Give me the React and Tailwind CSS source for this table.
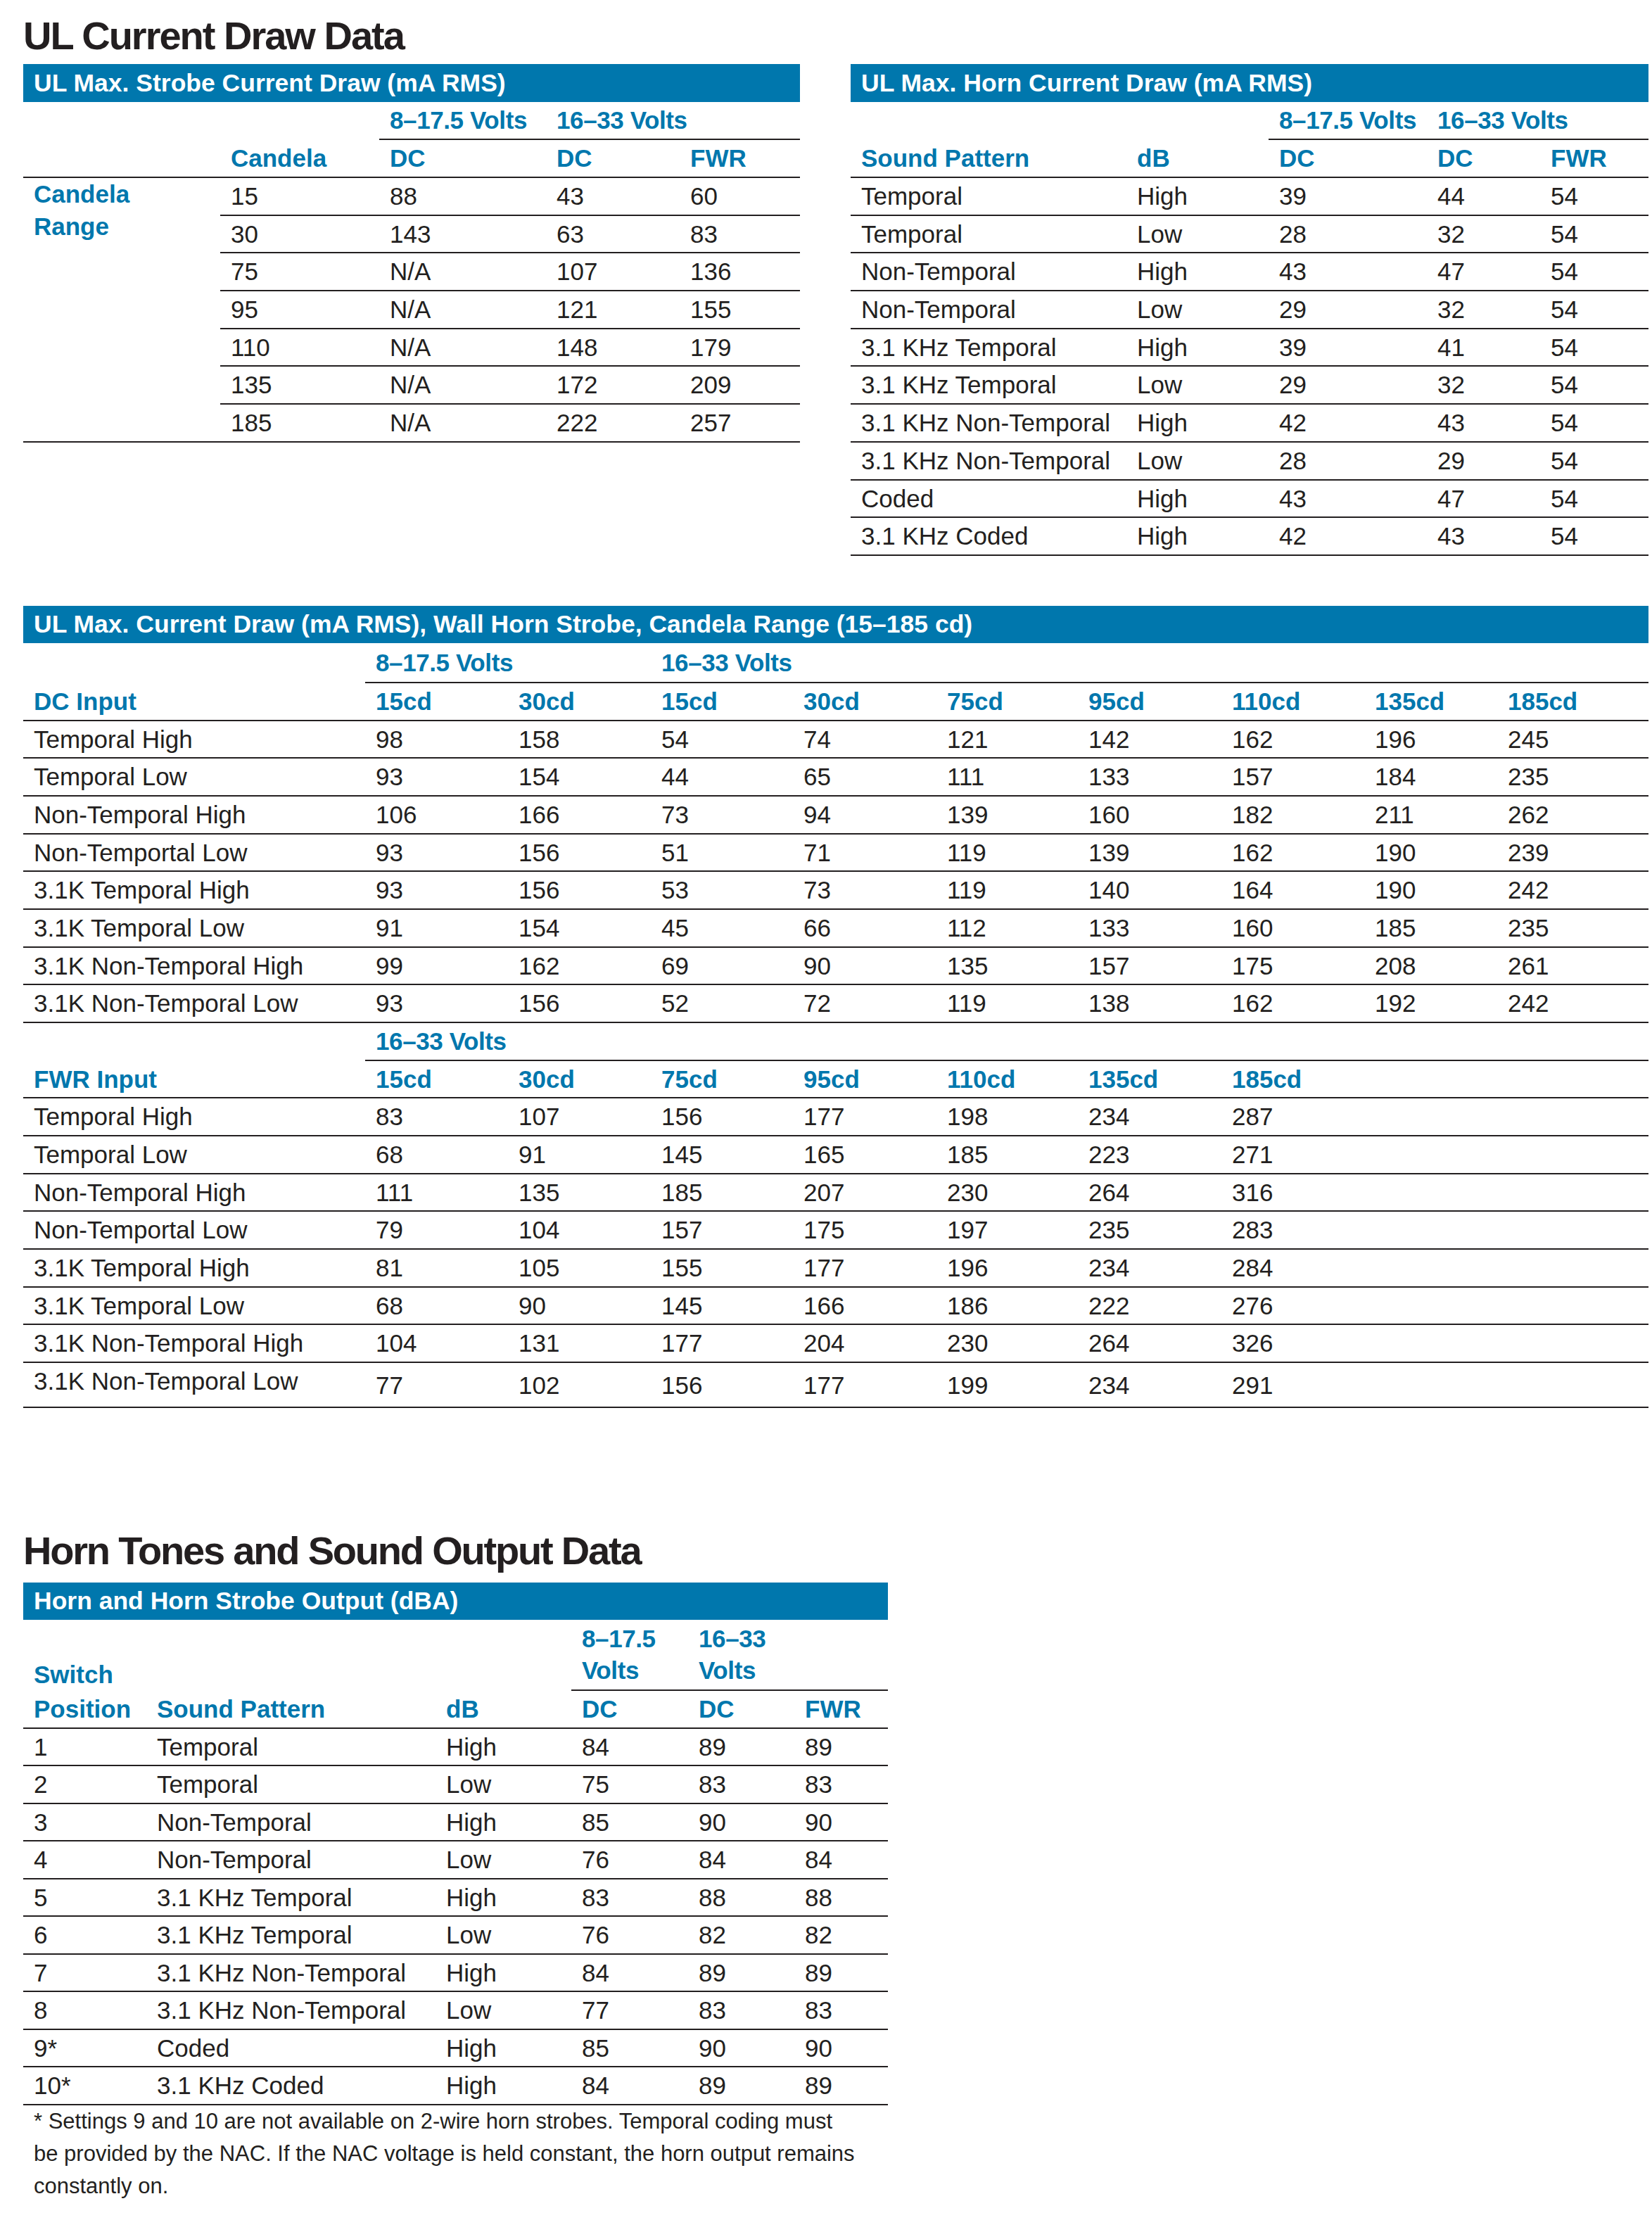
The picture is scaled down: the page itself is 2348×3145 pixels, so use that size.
import React from "react";

const strobeRows = [
  ["15", "88", "43", "60"],
  ["30", "143", "63", "83"],
  ["75", "N/A", "107", "136"],
  ["95", "N/A", "121", "155"],
  ["110", "N/A", "148", "179"],
  ["135", "N/A", "172", "209"],
  ["185", "N/A", "222", "257"],
];

const hornRows = [
  ["Temporal", "High", "39", "44", "54"],
  ["Temporal", "Low", "28", "32", "54"],
  ["Non-Temporal", "High", "43", "47", "54"],
  ["Non-Temporal", "Low", "29", "32", "54"],
  ["3.1 KHz Temporal", "High", "39", "41", "54"],
  ["3.1 KHz Temporal", "Low", "29", "32", "54"],
  ["3.1 KHz Non-Temporal", "High", "42", "43", "54"],
  ["3.1 KHz Non-Temporal", "Low", "28", "29", "54"],
  ["Coded", "High", "43", "47", "54"],
  ["3.1 KHz Coded", "High", "42", "43", "54"],
];

const dcRows = [
  ["Temporal High", "98", "158", "54", "74", "121", "142", "162", "196", "245"],
  ["Temporal Low", "93", "154", "44", "65", "111", "133", "157", "184", "235"],
  ["Non-Temporal High", "106", "166", "73", "94", "139", "160", "182", "211", "262"],
  ["Non-Temportal Low", "93", "156", "51", "71", "119", "139", "162", "190", "239"],
  ["3.1K Temporal High", "93", "156", "53", "73", "119", "140", "164", "190", "242"],
  ["3.1K Temporal Low", "91", "154", "45", "66", "112", "133", "160", "185", "235"],
  ["3.1K Non-Temporal High", "99", "162", "69", "90", "135", "157", "175", "208", "261"],
  ["3.1K Non-Temporal Low", "93", "156", "52", "72", "119", "138", "162", "192", "242"],
];

const fwrRows = [
  ["Temporal High", "83", "107", "156", "177", "198", "234", "287"],
  ["Temporal Low", "68", "91", "145", "165", "185", "223", "271"],
  ["Non-Temporal High", "111", "135", "185", "207", "230", "264", "316"],
  ["Non-Temportal Low", "79", "104", "157", "175", "197", "235", "283"],
  ["3.1K Temporal High", "81", "105", "155", "177", "196", "234", "284"],
  ["3.1K Temporal Low", "68", "90", "145", "166", "186", "222", "276"],
  ["3.1K Non-Temporal High", "104", "131", "177", "204", "230", "264", "326"],
];

const toneRows = [
  ["1", "Temporal", "High", "84", "89", "89"],
  ["2", "Temporal", "Low", "75", "83", "83"],
  ["3", "Non-Temporal", "High", "85", "90", "90"],
  ["4", "Non-Temporal", "Low", "76", "84", "84"],
  ["5", "3.1 KHz Temporal", "High", "83", "88", "88"],
  ["6", "3.1 KHz Temporal", "Low", "76", "82", "82"],
  ["7", "3.1 KHz Non-Temporal", "High", "84", "89", "89"],
  ["8", "3.1 KHz Non-Temporal", "Low", "77", "83", "83"],
  ["9*", "Coded", "High", "85", "90", "90"],
  ["10*", "3.1 KHz Coded", "High", "84", "89", "89"],
];

// column widths, cell text sits 15px in from each column start
const leftCols = ["w-[280px]", "w-[226px]", "w-[237px]", "w-[190px]", "w-[171px]"];
const rightCols = ["w-[392px]", "w-[202px]", "w-[225px]", "w-[161px]", "w-[154px]"];
const bigCols = [
  "w-[486px]",
  "w-[203px]",
  "w-[203px]",
  "w-[202px]",
  "w-[204px]",
  "w-[201px]",
  "w-[204px]",
  "w-[203px]",
  "w-[189px]",
  "w-[215px]",
];
const toneCols = ["w-[175px]", "w-[411px]", "w-[193px]", "w-[166px]", "w-[151px]", "w-[133px]"];

const Bar = ({ children, tall }) => (
  <div
    className={
      tall
        ? "h-[54px] bg-[#0077ad] pl-[15px] text-[35.5px] font-bold leading-[54px] text-white"
        : "h-[53px] bg-[#0077ad] pl-[15px] text-[35.5px] font-bold leading-[53px] text-white"
    }
  >
    {children}
  </div>
);

const Cells = ({ cols, values, head }) =>
  values.map((v, i) => (
    <div
      key={i}
      className={`${cols[i]} shrink-0 whitespace-nowrap pl-[15px] ${
        head ? "font-bold text-[#0077ad]" : ""
      }`}
    >
      {v}
    </div>
  ));

const Row = ({ cols, values, head }) => (
  <div className="flex h-[53.7px] border-b-2 border-[#231f20] leading-[51.7px]">
    <Cells cols={cols} values={values} head={head} />
  </div>
);

const StrobeTable = () => (
  <div className="w-[1104px] shrink-0">
    <Bar tall>UL Max. Strobe Current Draw (mA RMS)</Bar>
    <div className="flex h-[54px]">
      <div className="w-[506px] shrink-0" />
      <div className="flex flex-1 border-b-2 border-[#231f20] font-bold leading-[52px] tracking-[-0.4px] text-[#0077ad]">
        <div className="w-[237px] shrink-0 pl-[15px]">8–17.5 Volts</div>
        <div className="pl-[15px]">16–33 Volts</div>
      </div>
    </div>
    <div className="flex h-[54px] border-b-2 border-[#231f20] leading-[52px]">
      <Cells cols={leftCols} values={["", "Candela", "DC", "DC", "FWR"]} head />
    </div>
    <div className="flex border-b-2 border-[#231f20]">
      <div className="w-[280px] shrink-0 pl-[15px] font-bold leading-[46px] text-[#0077ad]">
        Candela
        <br />
        Range
      </div>
      <div className="flex-1">
        {strobeRows.map((r, i) => (
          <div
            key={i}
            className={
              i === strobeRows.length - 1
                ? "flex h-[51.7px] leading-[51.7px]"
                : "flex h-[53.7px] border-b-2 border-[#231f20] leading-[51.7px]"
            }
          >
            <Cells cols={leftCols.slice(1)} values={r} />
          </div>
        ))}
      </div>
    </div>
  </div>
);

const HornTable = () => (
  <div className="w-[1134px] shrink-0">
    <Bar tall>UL Max. Horn Current Draw (mA RMS)</Bar>
    <div className="flex h-[54px]">
      <div className="w-[594px] shrink-0" />
      <div className="flex flex-1 border-b-2 border-[#231f20] font-bold leading-[52px] tracking-[-0.4px] text-[#0077ad]">
        <div className="w-[225px] shrink-0 pl-[15px]">8–17.5 Volts</div>
        <div className="pl-[15px]">16–33 Volts</div>
      </div>
    </div>
    <div className="flex h-[54px] border-b-2 border-[#231f20] leading-[52px]">
      <Cells cols={rightCols} values={["Sound Pattern", "dB", "DC", "DC", "FWR"]} head />
    </div>
    {hornRows.map((r, i) => (
      <Row key={i} cols={rightCols} values={r} />
    ))}
  </div>
);

const WallTable = () => (
  <div className="mt-[71px]">
    <Bar>UL Max. Current Draw (mA RMS), Wall Horn Strobe, Candela Range (15–185 cd)</Bar>

    <div className="flex h-[57px]">
      <div className="w-[486px] shrink-0" />
      <div className="flex flex-1 border-b-2 border-[#231f20] font-bold leading-[55px] tracking-[-0.4px] text-[#0077ad]">
        <div className="w-[406px] shrink-0 pl-[15px]">8–17.5 Volts</div>
        <div className="pl-[15px]">16–33 Volts</div>
      </div>
    </div>
    <Row
      cols={bigCols}
      values={["DC Input", "15cd", "30cd", "15cd", "30cd", "75cd", "95cd", "110cd", "135cd", "185cd"]}
      head
    />
    {dcRows.map((r, i) => (
      <Row key={i} cols={bigCols} values={r} />
    ))}

    <div className="flex h-[53.5px]">
      <div className="w-[486px] shrink-0" />
      <div className="flex flex-1 border-b-2 border-[#231f20] font-bold leading-[51.5px] tracking-[-0.4px] text-[#0077ad]">
        <div className="pl-[15px]">16–33 Volts</div>
      </div>
    </div>
    <Row
      cols={bigCols}
      values={["FWR Input", "15cd", "30cd", "75cd", "95cd", "110cd", "135cd", "185cd"]}
      head
    />
    {fwrRows.map((r, i) => (
      <Row key={i} cols={bigCols} values={r} />
    ))}
    <div className="flex h-[64px] border-b-2 border-[#231f20] leading-[51.7px]">
      <div className="w-[486px] shrink-0 pl-[15px]">3.1K Non-Temporal Low</div>
      {["77", "102", "156", "177", "199", "234", "291"].map((v, i) => (
        <div key={i} className={`${bigCols[i + 1]} shrink-0 pl-[15px] pt-[6px]`}>
          {v}
        </div>
      ))}
    </div>
  </div>
);

const ToneTable = () => (
  <div className="w-[1229px]">
    <Bar>Horn and Horn Strobe Output (dBA)</Bar>
    <div className="flex h-[101px] items-end">
      <div className="w-[175px] shrink-0 pl-[15px] font-bold leading-[47px] text-[#0077ad]">Switch</div>
      <div className="w-[604px] shrink-0" />
      <div className="flex h-full flex-1 items-end border-b-2 border-[#231f20] pb-[5px] font-bold leading-[44.4px] tracking-[-0.4px] text-[#0077ad]">
        <div className="w-[166px] shrink-0 pl-[15px]">
          8–17.5
          <br />
          Volts
        </div>
        <div className="pl-[15px]">
          16–33
          <br />
          Volts
        </div>
      </div>
    </div>
    <Row cols={toneCols} values={["Position", "Sound Pattern", "dB", "DC", "DC", "FWR"]} head />
    {toneRows.map((r, i) => (
      <div key={i} className="flex h-[53.5px] border-b-2 border-[#231f20] leading-[51.5px]">
        <Cells cols={toneCols} values={r} />
      </div>
    ))}
    <p className="pl-[15px] text-[31px] leading-[46px]">
      * Settings 9 and 10 are not available on 2-wire horn strobes. Temporal coding must
      <br />
      be provided by the NAC. If the NAC voltage is held constant, the horn output remains
      <br />
      constantly on.
    </p>
  </div>
);

export default function App() {
  return (
    <div className="min-h-[3145px] bg-white font-['Liberation_Sans',Arial,sans-serif] text-[35px] text-[#231f20]">
      <div className="ml-[33px] w-[2310px] pt-[23px] font-[family-name:Liberation_Sans,Arial,sans-serif]">
        <h1 className="text-[56px] font-bold leading-[56px] tracking-[-2px]">UL Current Draw Data</h1>
        <div className="mt-[12px] flex items-start gap-[72px]">
          <StrobeTable />
          <HornTable />
        </div>

        <WallTable />

        <h1 className="mt-[175px] text-[56px] font-bold leading-[56px] tracking-[-2.2px]">
          Horn Tones and Sound Output Data
        </h1>
        <div className="mt-[17px]">
          <ToneTable />
        </div>
      </div>
    </div>
  );
}
